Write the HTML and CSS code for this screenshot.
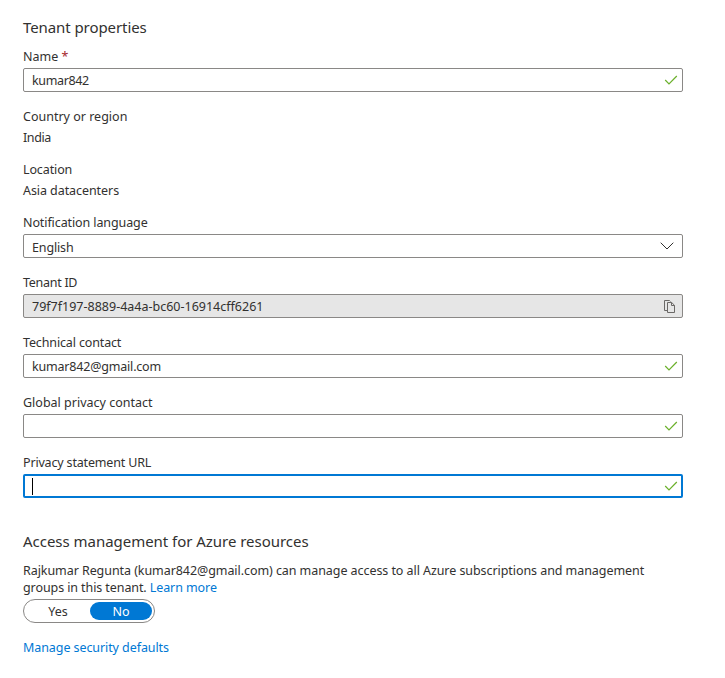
FILE: index.html
```html
<!DOCTYPE html>
<html lang="en">
<head>
<meta charset="utf-8">
<title>Tenant properties</title>
<link rel="stylesheet" href="styles.css">
</head>
<body>
<svg class="defs" aria-hidden="true">
  <symbol id="check" viewBox="0 0 14 12"><path d="M1.2 6 5 9.8 12.8 2" fill="none" stroke="#6bb02c" stroke-width="1.2"/></symbol>
</svg>
<main class="form">
  <h2 class="title">Tenant properties</h2>
  <div class="field">
    <div class="label">Name <span class="required">*</span></div>
    <div class="input"><span class="text name">kumar842</span><svg class="check"><use href="#check"/></svg></div>
  </div>
  <div class="static">
    <div class="label">Country or region</div>
    <div class="label india">India</div>
  </div>
  <div class="static">
    <div class="label location">Location</div>
    <div class="label asia">Asia datacenters</div>
  </div>
  <div class="field">
    <div class="label notification">Notification language</div>
    <div class="input select"><span class="text language">English</span><svg class="chevron" viewBox="0 0 14 8"><path d="M.7.7 7 7 13.3.7" fill="none" stroke="#323130" stroke-width="1"/></svg></div>
  </div>
  <div class="field">
    <div class="label tenant">Tenant ID</div>
    <div class="input readonly"><span class="text">79f7f197-8889-4a4a-bc60-16914cff6261</span><svg class="copy" viewBox="0 0 12 13"><path d="M3.5 10.5h-3v-10h5l1 1M3.5 2.5h4.2l2.8 2.8v7.2h-7zM7.5 2.5v3h3" fill="none" stroke="#6b6967" stroke-width="1"/></svg></div>
  </div>
  <div class="field">
    <div class="label technical">Technical contact</div>
    <div class="input"><span class="text email">kumar842@gmail.com</span><svg class="check"><use href="#check"/></svg></div>
  </div>
  <div class="field">
    <div class="label">Global privacy contact</div>
    <div class="input"><span class="text"></span><svg class="check"><use href="#check"/></svg></div>
  </div>
  <div class="field">
    <div class="label privacy">Privacy statement URL</div>
    <div class="input focused"><span class="caret"></span><svg class="check"><use href="#check"/></svg></div>
  </div>
  <h2 class="title access">Access management for Azure resources</h2>
  <p class="description"><span class="line-one">Rajkumar Regunta (kumar842@gmail.com) can manage access to all Azure subscriptions and management</span><br><span class="line-two">groups in this tenant. <a class="link">Learn more</a></span></p>
  <div class="toggle"><span class="option">Yes</span><span class="option selected">No</span></div>
  <a class="link manage">Manage security defaults</a>
</main>
</body>
</html>
```
FILE: styles.css
```css
body {
  margin: 0;
  background: #fff;
  color: #323130;
  font: 12.5px/18px "Noto Sans", "Open Sans", sans-serif;
}
.defs { position: absolute; width: 0; height: 0; }
.form {
  display: flex;
  flex-direction: column;
  width: 660px;
  padding: 15px 0 0 23px;
}
.title {
  margin: 0 0 9px;
  font-size: 15px;
  font-weight: 400;
  line-height: 24px;
  letter-spacing: -0.08px;
  white-space: nowrap;
}
.field { display: flex; flex-direction: column; gap: 2px; margin-bottom: 16px; }
.static { display: flex; flex-direction: column; gap: 3px; margin-bottom: 14px; }
.label { height: 18px; white-space: nowrap; }
.required { color: #a4262c; }
.input {
  box-sizing: border-box;
  display: flex;
  align-items: center;
  justify-content: space-between;
  height: 24px;
  padding: 0 4px 0 8px;
  border: 1px solid #8a8886;
  border-radius: 2px;
}
.text { padding-top: 2px; }
.readonly { background: #e6e6e6; padding-right: 6px; }
.select { padding-right: 8px; }
.focused { border: 2px solid #0078d4; padding: 0 3px 0 7px; }
.caret { width: 1px; height: 17px; background: #000; }
.check { width: 14px; height: 12px; }
.chevron { width: 14px; height: 8px; }
.copy { width: 12px; height: 13px; }
.name { letter-spacing: -0.35px; }
.india { letter-spacing: -0.4px; }
.location { letter-spacing: -0.12px; }
.asia { letter-spacing: -0.07px; }
.notification { letter-spacing: -0.1px; }
.language { padding-top: 3px; letter-spacing: -0.15px; }
.tenant { letter-spacing: -0.28px; }
.technical { letter-spacing: -0.14px; }
.email { letter-spacing: -0.19px; }
.privacy { letter-spacing: -0.17px; }
.access { margin-top: 15px; letter-spacing: -0.03px; }
.description { margin: 0 0 3px; line-height: 17px; white-space: nowrap; }
.line-one { letter-spacing: -0.066px; }
.line-two { letter-spacing: -0.09px; }
.link { color: #0078d4; }
.toggle {
  box-sizing: border-box;
  display: flex;
  width: 132px;
  height: 24px;
  padding: 2px;
  border: 1px solid #8a8886;
  border-radius: 12px;
}
.option { width: 64px; border-radius: 9px; text-align: center; line-height: 19px; height: 18px; }
.selected { width: 62px; background: #0078d4; color: #fff; }
.manage { margin-top: 16px; letter-spacing: -0.08px; }
```
